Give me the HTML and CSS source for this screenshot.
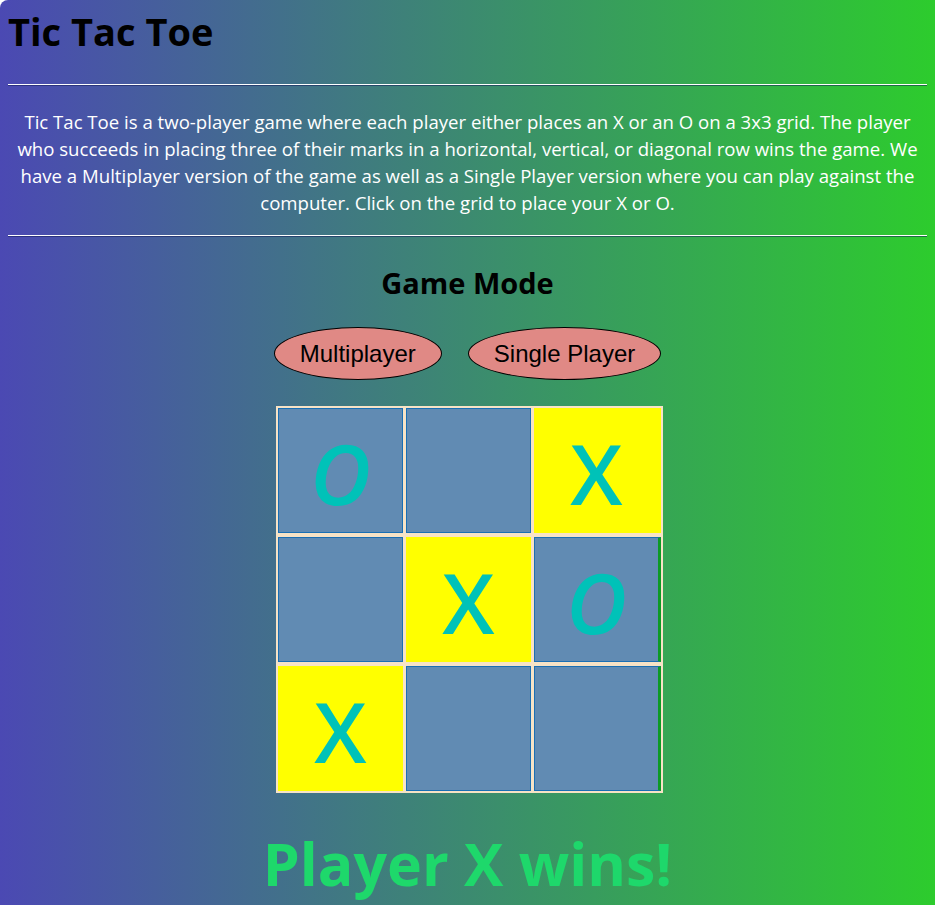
FILE: index.html
```html
<!DOCTYPE html>
<html lang="en">
<head>
<meta charset="utf-8">
<title>Tic Tac Toe</title>
<link rel="stylesheet" href="styles.css">
</head>
<body>
  <h1 class="title">Tic Tac Toe</h1>
  <hr class="rule rule-top">
  <p class="intro">Tic Tac Toe is a two-player game where each player either places an X or an O on a 3x3 grid. The player who succeeds in placing three of their marks in a horizontal, vertical, or diagonal row wins the game. We have a Multiplayer version of the game as well as a Single Player version where you can play against the computer. Click on the grid to place your X or O.</p>
  <hr class="rule rule-bottom">
  <h2 class="mode-title">Game Mode</h2>
  <div class="modes">
    <button class="mode-btn">Multiplayer</button>
    <button class="mode-btn">Single Player</button>
  </div>
  <div class="board">
    <div class="cell"><span class="mark mark-o">O</span></div>
    <div class="cell"></div>
    <div class="cell cell-win cell-end"><span class="mark">X</span></div>
    <div class="cell"></div>
    <div class="cell cell-win"><span class="mark">X</span></div>
    <div class="cell cell-end"><span class="mark mark-o">O</span></div>
    <div class="cell cell-win"><span class="mark">X</span></div>
    <div class="cell"></div>
    <div class="cell cell-end"></div>
  </div>
  <div class="result">Player X wins!</div>
</body>
</html>
```
FILE: styles.css
```css
html {
  background: #ffffff;
  height: 100%;
}
body {
  margin: 0;
  padding: 8px;
  min-height: 100%;
  box-sizing: border-box;
  border-top-left-radius: 8px;
  background: linear-gradient(to right, #4b49b3 0%, #3c8a70 50%, #2dcc2d 100%);
  font-family: "Open Sans", sans-serif;
  color: #000;
}
.title {
  margin: 0;
  font-size: 38px;
  line-height: 46px;
  font-weight: 700;
}
.rule {
  margin: 0;
  height: 0;
  border: 0;
  border-top: 1px solid #ffffff;
  border-bottom: 1px solid rgba(20, 30, 90, 0.55);
}
.rule-top {
  margin-top: 30px;
}
.intro {
  margin: 22px 0 19px;
  text-align: center;
  color: #ffffff;
  font-size: 18.6px;
  line-height: 27px;
}
.mode-title {
  margin: 28px 0 0;
  text-align: center;
  font-size: 29px;
  line-height: 36px;
  font-weight: 700;
}
.modes {
  margin-top: 26px;
  display: flex;
  justify-content: center;
  gap: 26px;
}
.mode-btn {
  height: 53px;
  padding: 0 25px;
  border: 1px solid #000;
  border-radius: 50%;
  background: #e08985;
  font-family: "Liberation Sans", Arial, sans-serif;
  font-size: 24px;
  color: #000;
}
.board {
  margin: 26px 0 0 calc(50% - 191.5px);
  width: max-content;
  display: grid;
  grid-template-columns: 125px 125px 127px;
  grid-auto-rows: 125px;
  gap: 4px 3px;
  padding: 2px;
  background: #f7e3c6;
}
.cell {
  box-sizing: border-box;
  border: 1px solid #1a6fb4;
  background: #618bb3;
  display: flex;
  align-items: center;
  justify-content: center;
}
.cell-end {
  border-right: 3px solid #0c9a24;
}
.cell-win {
  background: #ffff00;
  border-color: #ffff00;
}
.mark {
  font-family: "Open Sans", sans-serif;
  font-size: 84px;
  font-weight: 600;
  line-height: 1;
  color: #00c2b8;
  padding-top: 4px;
}
.mark-o {
  font-style: italic;
}
.result {
  margin-top: 35px;
  text-align: center;
  font-size: 59px;
  line-height: 70px;
  font-weight: 700;
  color: #1ed86b;
}
```
